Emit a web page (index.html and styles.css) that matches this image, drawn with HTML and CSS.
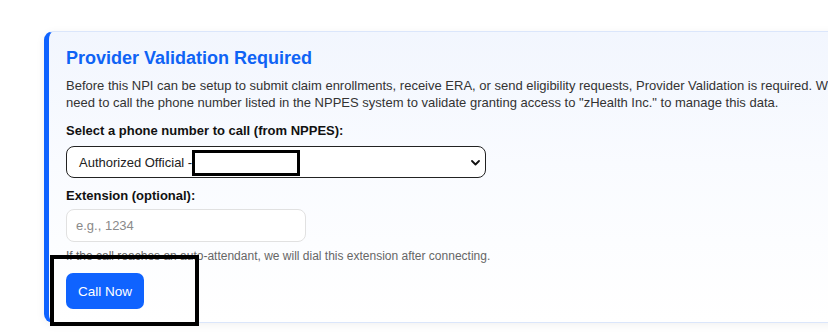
FILE: index.html
```html
<!DOCTYPE html>
<html lang="en">
<head>
<meta charset="utf-8">
<title>Provider Validation</title>
<link rel="stylesheet" href="styles.css">
</head>
<body>
<div class="page">
  <section class="card">
    <h2 class="title">Provider Validation Required</h2>
    <p class="intro">Before this NPI can be setup to submit claim enrollments, receive ERA, or send eligibility requests, Provider Validation is required. We will need to call the phone number listed in the NPPES system to validate granting access to "zHealth Inc." to manage this data.</p>
    <label class="label">Select a phone number to call (from NPPES):</label>
    <div class="select">
      <span class="select-text">Authorized Official - </span>
      <span class="redact-small"></span>
      <svg class="chev" width="9" height="6" viewBox="0 0 9 6"><path d="M1 1 L4.5 4.5 L8 1" fill="none" stroke="#111" stroke-width="1.8" stroke-linecap="round" stroke-linejoin="round"/></svg>
    </div>
    <label class="label label-ext">Extension (optional):</label>
    <div class="input"><span class="placeholder">e.g., 1234</span></div>
    <p class="help">If the call reaches an auto-attendant, we will dial this extension after connecting.</p>
    <button class="btn">Call Now</button>
  </section>
  <div class="redact-big"></div>
</div>
</body>
</html>
```
FILE: styles.css
```css
html, body {
  margin: 0;
  padding: 0;
  background: #ffffff;
  overflow: hidden;
}
body {
  width: 828px;
  height: 335px;
  font-family: "Liberation Sans", Arial, sans-serif;
}
.page {
  position: relative;
  padding: 31px 0 0 44px;
}
.card {
  width: 900px;
  box-sizing: border-box;
  height: 292px;
  border: 1px solid #dbe6fb;
  border-left: 5px solid #0f63ff;
  border-radius: 9px;
  background: linear-gradient(180deg, #f2f6fe 0%, #f9fbff 45%, #ffffff 100%);
  box-shadow: 0 2px 10px rgba(0, 0, 0, 0.06);
  padding: 13px 17px;
  position: relative;
}
.title {
  margin: 0;
  font-size: 18px;
  line-height: 26px;
  font-weight: bold;
  color: #0f63f5;
}
.intro {
  margin: 6px 0 0;
  font-size: 13px;
  line-height: 17px;
  color: #333;
  width: 812px;
}
.label {
  display: block;
  margin-top: 12px;
  font-size: 13px;
  line-height: 16px;
  font-weight: bold;
  color: #111;
}
.select {
  position: relative;
  margin-top: 7px;
  width: 420px;
  height: 32px;
  box-sizing: border-box;
  border: 1px solid #222;
  border-radius: 8px;
  background: #fff;
  display: flex;
  align-items: center;
  padding-left: 12px;
  font-size: 13px;
  color: #222;
}
.select-text {
  white-space: pre;
}
.redact-small {
  position: absolute;
  left: 125px;
  top: 3px;
  width: 108px;
  height: 26px;
  box-sizing: border-box;
  border: 3px solid #000;
  background: #fff;
}
.chev {
  position: absolute;
  right: 5px;
  top: 13px;
}
.label-ext {
  margin-top: 10px;
}
.input {
  margin-top: 5px;
  width: 240px;
  height: 33px;
  box-sizing: border-box;
  border: 1px solid #e1e1e1;
  border-radius: 8px;
  background: #fff;
  display: flex;
  align-items: center;
  padding-left: 9px;
  font-size: 13px;
}
.placeholder {
  color: #8a8a8a;
}
.help {
  margin: 7px 0 0;
  font-size: 12px;
  line-height: 14px;
  color: #666;
}
.btn {
  display: block;
  margin-top: 10px;
  width: 78px;
  height: 36px;
  border: 0;
  border-radius: 7px;
  background: #0f63ff;
  color: #fff;
  font-family: "Liberation Sans", Arial, sans-serif;
  font-size: 13.5px;
  padding: 0;
}
.redact-big {
  position: absolute;
  left: 50px;
  top: 255px;
  width: 149px;
  height: 71px;
  box-sizing: border-box;
  border: 4px solid #000;
}
```
